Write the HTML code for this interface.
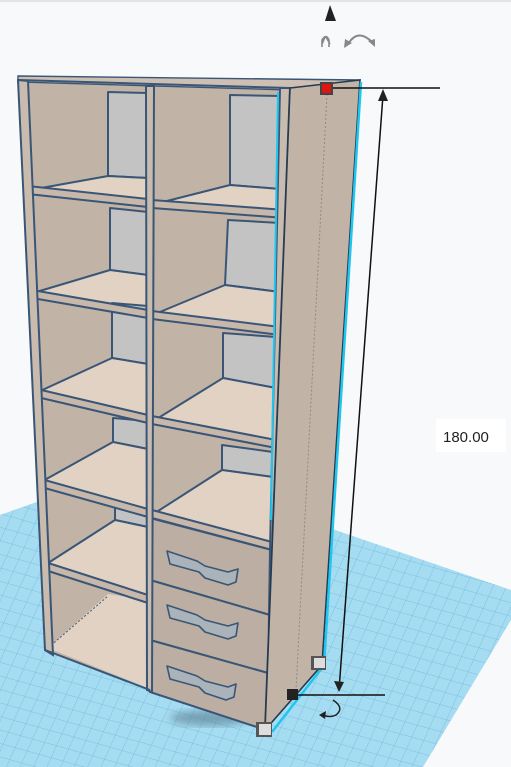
<!DOCTYPE html>
<html><head><meta charset="utf-8"><style>
html,body{margin:0;padding:0;background:#f8f9fa;overflow:hidden}
svg{display:block}
text{font-family:"Liberation Sans",sans-serif}
</style></head><body>
<svg width="511" height="767" viewBox="0 0 511 767" xmlns="http://www.w3.org/2000/svg">
<defs>
<pattern id="g" width="12" height="12" patternUnits="userSpaceOnUse" patternTransform="matrix(1,0.28,-0.45,1,0,0)">
<rect width="12" height="12" fill="#a6dcf1"/>
<path d="M0 0H12M0 0V12" stroke="#76c0e0" stroke-width="0.9"/>
</pattern>
<filter id="b"><feGaussianBlur stdDeviation="4"/></filter>
</defs>
<rect width="511" height="767" fill="#f8f9fa"/>
<line x1="0" y1="1" x2="511" y2="1" stroke="#e2e4e8" stroke-width="2"/>
<polygon points="0,515 110,476 300,518 511,590 511,620 423,767 0,767" fill="url(#g)"/>
<ellipse cx="210" cy="718" rx="40" ry="8" fill="#5a7d90" opacity="0.6" filter="url(#b)"/>

<polygon points="18,78 290,88 265,730 45,650" fill="#c2b3a7"/>
<polygon points="18,76 360,80 358,86 290,90 18,82" fill="#cdbfb3" stroke="#3a5676" stroke-width="1.4"/>

<g stroke="#3a5676" stroke-width="2" stroke-linejoin="round">
<polygon points="108,92 148,93 148,178 108,176" fill="#c3c3c3"/>
<polygon points="230,95 280,96 280,189 230,185" fill="#c3c3c3"/>
<polygon points="30,190 148,203 148,178 108,176" fill="#e1d2c4"/>
<polygon points="155,204 282,213 280,189 230,185" fill="#e1d2c4"/>
<polygon points="110,208 148,212 148,275 110,270" fill="#c3c3c3"/>
<polygon points="228,220 280,223 280,292 225,285" fill="#c3c3c3"/>
<polygon points="33,293 148,313 148,275 110,270" fill="#e1d2c4"/>
<polygon points="155,314 280,330 280,292 225,285" fill="#e1d2c4"/>
<polygon points="112,303 148,306 148,364 112,358" fill="#c3c3c3"/>
<polygon points="223,333 276,337 276,388 223,378" fill="#c3c3c3"/>
<polygon points="38,392 148,418 148,364 112,358" fill="#e1d2c4"/>
<polygon points="155,420 276,443 276,388 223,378" fill="#e1d2c4"/>
<polygon points="113,418 148,421 148,449 113,442" fill="#c3c3c3"/>
<polygon points="222,445 273,452 273,477 222,470" fill="#c3c3c3"/>
<polygon points="41,482 148,512 148,449 113,442" fill="#e1d2c4"/>
<polygon points="155,513 272,545 273,477 222,470" fill="#e1d2c4"/>
<polygon points="115,506 148,513 148,527 115,520" fill="#c3c3c3"/>
<polygon points="45,565 148,598 148,527 115,520" fill="#e1d2c4"/>
<polygon points="48,648 148,688 148,600 108,594" fill="#e1d2c4" stroke="none"/>
<line x1="48" y1="648" x2="108" y2="596" stroke-dasharray="2 2" stroke-width="1"/>

<polygon points="28,186 148,199 148,207 28,194" fill="#c7b8ab"/>
<polygon points="152,200 285,210 285,218 152,208" fill="#c7b8ab"/>
<polygon points="32,290 148,310 148,318 32,298" fill="#c7b8ab"/>
<polygon points="152,311 280,327 280,335 152,319" fill="#c7b8ab"/>
<polygon points="37,389 148,415 148,423 37,397" fill="#c7b8ab"/>
<polygon points="152,416 276,440 276,448 152,424" fill="#c7b8ab"/>
<polygon points="41,479 148,509 148,517 41,487" fill="#c7b8ab"/>
<polygon points="152,510 272,542 272,550 152,518" fill="#c7b8ab"/>
<polygon points="45,562 148,595 148,603 45,570" fill="#c7b8ab"/>

<polygon points="150,518 272,550 270,615 150,580" fill="#bcaea2"/>
<polygon points="150,580 270,615 268,673 150,640" fill="#bcaea2"/>
<polygon points="150,640 268,673 266,730 150,692" fill="#bcaea2"/>
</g>
<g fill="#aab2ba" stroke="#3a5676" stroke-width="1.6" stroke-linejoin="round">
<polygon points="167,551 197,561 205,566 228,572 238,569 236,582 228,585 205,578 199,572 170,564"/>
<polygon points="167,605 197,615 205,620 228,626 238,623 236,636 228,639 205,632 199,626 170,618"/>
<polygon points="167,666 197,676 205,681 228,687 236,684 234,697 226,700 205,693 199,687 170,679"/>
</g>

<g stroke="#3a5676" stroke-width="2" fill="#c9bbae">
<polygon points="18,80 28,81 53,655 45,650"/>
<polygon points="146,86 154,86 152,692 147,690"/>
<polygon points="280,88 290,88 265,730 268,680 270,550"/>
<line x1="18" y1="80" x2="290" y2="88" fill="none"/>
<line x1="45" y1="650" x2="150" y2="690" fill="none"/>
</g>

<polygon points="290,88 360,80 322,665 265,730" fill="#c2b3a7" stroke="#263a50" stroke-width="1.6"/>
<line x1="327" y1="94" x2="296" y2="690" stroke="#8a8a8a" stroke-width="1" stroke-dasharray="2 2"/>
<line x1="361" y1="82" x2="324" y2="665" stroke="#1fc7f0" stroke-width="2.5"/>
<line x1="322" y1="668" x2="272" y2="732" stroke="#1fc7f0" stroke-width="2.5"/>
<line x1="278" y1="92" x2="271" y2="520" stroke="#1fc7f0" stroke-width="2"/>

<g stroke="#111" stroke-width="1.5">
<line x1="330" y1="88" x2="440" y2="88"/>
<line x1="383" y1="95" x2="339" y2="690"/>
<line x1="295" y1="695" x2="385" y2="695"/>
</g>
<polygon points="383,89 378,101 388,101" fill="#222"/>
<polygon points="339,692 334,681 344,682" fill="#222"/>
<path d="M333 700 Q345 708 336 715 Q330 718 323 715" stroke="#222" stroke-width="1.5" fill="none"/>
<polygon points="319,715 326,711 325,719" fill="#222"/>

<rect x="320" y="82" width="13" height="13" fill="#444"/><rect x="322" y="84" width="9" height="9" fill="#e0150f"/>
<rect x="287" y="689" width="11" height="11" fill="#222"/>
<rect x="311" y="656" width="15" height="14" fill="#555"/><rect x="314" y="658" width="11" height="10" fill="#ddd"/>
<rect x="256" y="722" width="16" height="15" fill="#555"/><rect x="259" y="724" width="12" height="11" fill="#ddd"/>

<rect x="436" y="419" width="70" height="33" fill="#fff"/>
<text x="443" y="442" font-size="15" fill="#222">180.00</text>

<polygon points="330,5 325,21 336,21" fill="#222"/>
<path d="M322 47 L322 40 Q326 33 329 40 L329 47 M325 37 L322 44 M326 37 L330 44" stroke="#888" stroke-width="1.6" fill="none"/>
<path d="M348 44 Q358 28 372 42" stroke="#888" stroke-width="2" fill="none"/>
<polygon points="344,48 345,39 352,43" fill="#888"/><polygon points="375,47 368,41 375,39" fill="#888"/>
</svg>
</body></html>
